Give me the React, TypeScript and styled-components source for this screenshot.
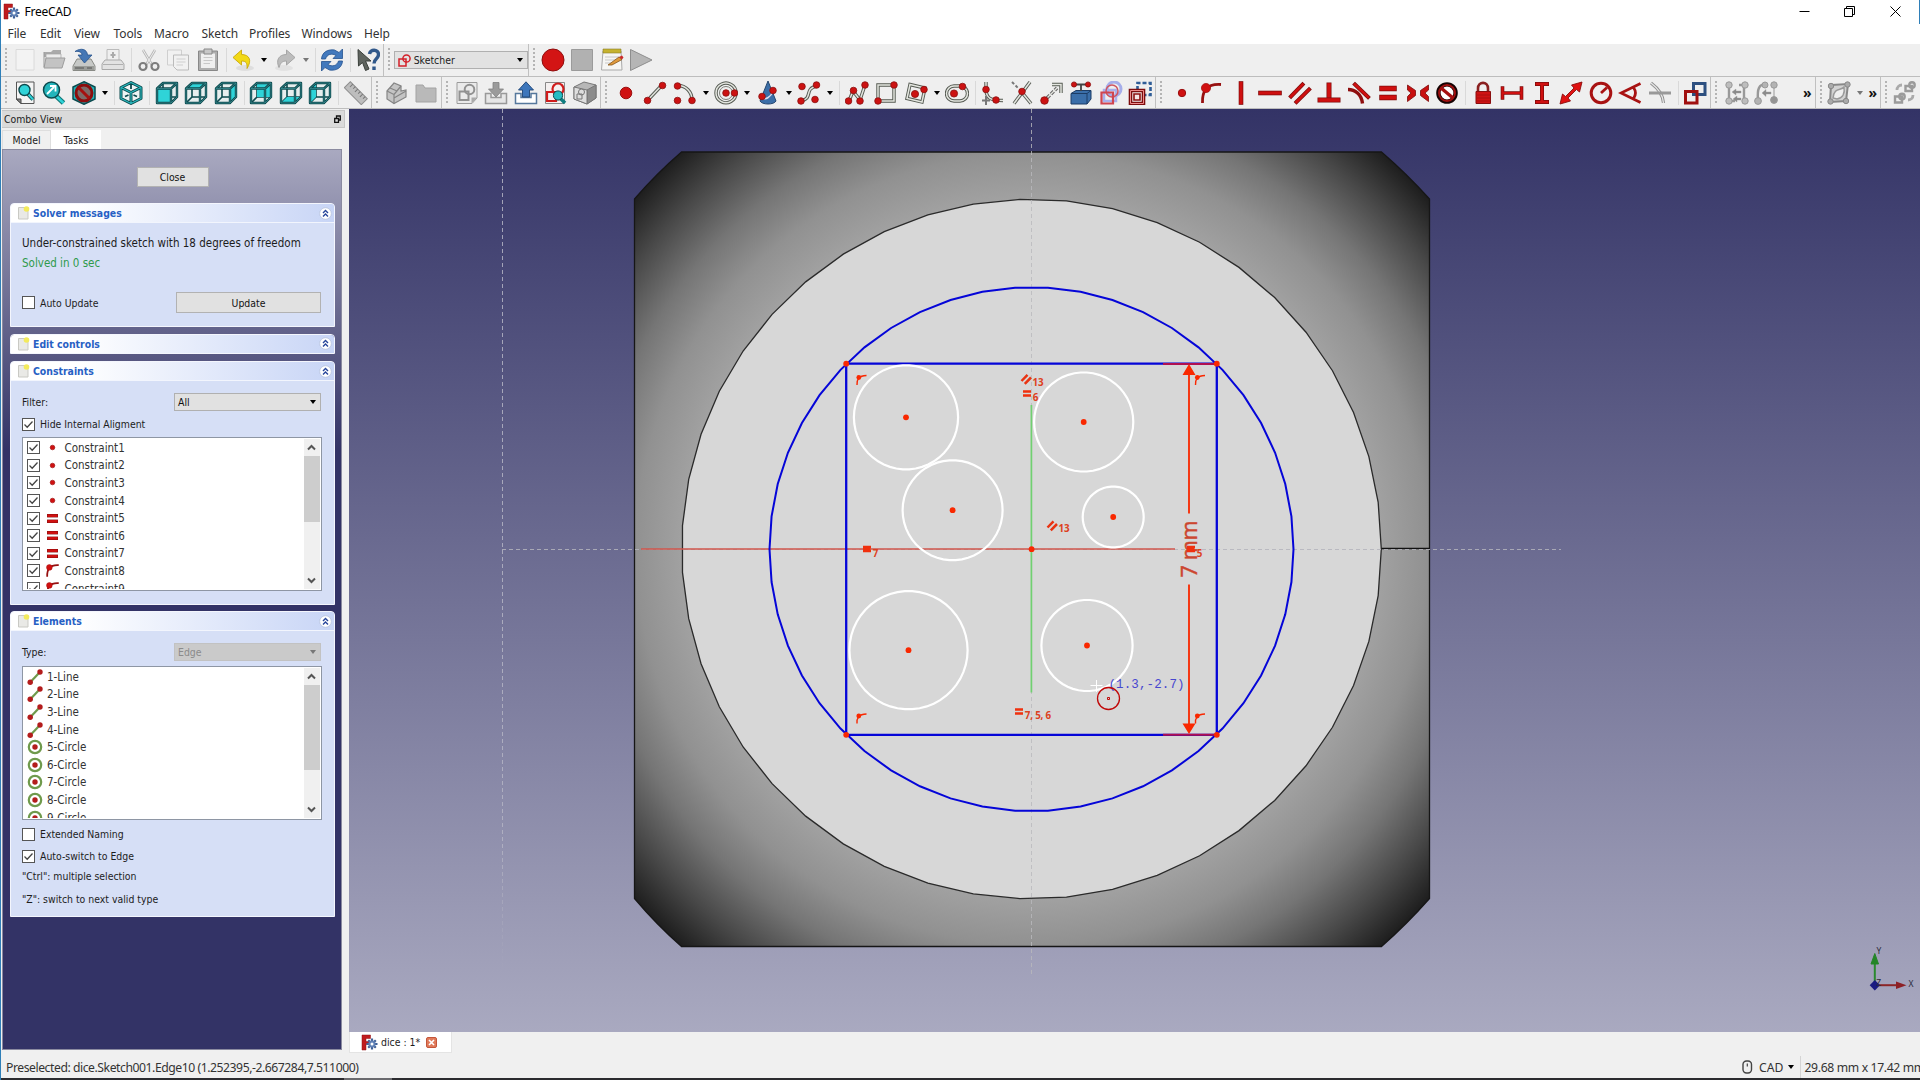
import React from "react";
import styled, { createGlobalStyle, css } from "styled-components";

const GlobalStyle = createGlobalStyle`
  *, *::before, *::after { box-sizing: border-box; }
  body { margin: 0; background: #f0f0f0; overflow: hidden; }
`;

const ui = `"Noto Sans", "Open Sans", sans-serif`;
const narrow = `"DejaVu Sans Condensed", "DejaVu Sans", "Noto Sans", sans-serif`;

/* ---------- window frame ---------- */
const Window = styled.div`
  width: 1920px;
  height: 1080px;
  display: flex;
  flex-direction: column;
  background: #f0f0f0;
  font-family: ${ui};
  font-size: 12px;
  color: #1c1c1c;
  border-left: 1px solid #2f7fb8;
  overflow: hidden;
  white-space: nowrap;
`;
const TitleBar = styled.header`
  height: 24px;
  display: flex;
  align-items: center;
  background: #fff;
  padding: 0 1px 1.5px 2px;
  border-right: 1px solid #2f7fb8;
`;
const TitleText = styled.span`
  flex: 1;
  margin-left: 4.5px;
  font-size: 12px;
  letter-spacing: -0.25px;
  color: #000;
`;
const WindowButton = styled.span`
  width: 45.5px;
  display: flex;
  justify-content: center;
`;
const MenuBar = styled.nav`
  height: 20px;
  display: flex;
  align-items: center;
  background: #fff;
  padding: 0 0 1px 6.5px;
`;
const MenuItem = styled.span<{ $w: number }>`
  width: ${(p) => p.$w}px;
  font-size: 12px;
  letter-spacing: -0.1px;
  color: #333;
`;

/* ---------- toolbars ---------- */
const ToolRow = styled.div<{ $h: number }>`
  height: ${(p) => p.$h}px;
  flex: none;
  display: flex;
  align-items: center;
  border-bottom: 1px solid #bdbdbd;
  background: #efefef;
  overflow: hidden;
`;
const Cell = styled.span`
  width: 29.5px;
  flex: none;
  display: flex;
  justify-content: center;
`;
const Drop = styled.span<{ $dim?: boolean }>`
  width: 12px;
  flex: none;
  display: flex;
  justify-content: center;
  &::after {
    content: "";
    border: 3.5px solid transparent;
    border-top: 4.5px solid ${(p) => (p.$dim ? "#777" : "#000")};
    border-bottom: 0;
  }
`;
const Separator = styled.span`
  width: 6px;
  height: 24px;
  flex: none;
  display: flex;
  &::after {
    content: "";
    width: 1px;
    margin-left: 3px;
    background: #d9d9d9;
  }
`;
const Grip = styled.span<{ $w: number; $first?: boolean }>`
  width: ${(p) => p.$w}px;
  align-self: stretch;
  flex: none;
  padding: 4px 0 4px 4px;
  border-left: ${(p) => (p.$first ? "0" : "1px solid #c0c0c0")};
  &::after {
    content: "";
    display: block;
    width: 2px;
    height: 100%;
    background: repeating-linear-gradient(#b4b4b4 0 2px, transparent 2px 4px);
  }
`;
const More = styled.span<{ $w: number }>`
  width: ${(p) => p.$w}px;
  flex: none;
  text-align: right;
  font-size: 14px;
  font-weight: 700;
  line-height: 14px;
  color: #111;
  padding-right: 3px;
`;
const WorkbenchSelect = styled.span`
  width: 134px;
  height: 18px;
  flex: none;
  display: flex;
  align-items: center;
  gap: 3px;
  padding: 0 1px 0 3px;
  background: #e2e2e2;
  border: 1px solid #b0b0b0;
  font: 10.4px ${narrow};
  & > b { flex: 1; font-weight: 400; }
`;
const Gap = styled.span<{ $w: number }>`
  width: ${(p) => p.$w}px;
  flex: none;
`;

/* ---------- main area ---------- */
const Main = styled.div`
  flex: 1;
  min-height: 0;
  display: flex;
`;
const Side = styled.aside`
  width: 348px;
  display: flex;
  flex-direction: column;
  padding: 1px 4px 0 1px;
  font-family: ${narrow};
`;
const DockTitle = styled.div`
  width: 343px;
  height: 18px;
  display: flex;
  align-items: center;
  justify-content: space-between;
  padding: 0 3px 1px 2px;
  background: #dadada;
  border: 1px solid #c6c6c6;
  border-left: 0;
  font-size: 10.4px;
`;
const TabRow = styled.div`
  height: 21px;
  padding-top: 2px;
  display: flex;
`;
const Tab = styled.span<{ $on?: boolean }>`
  width: ${(p) => (p.$on ? 50 : 49)}px;
  display: flex;
  align-items: center;
  justify-content: center;
  padding-bottom: 1px;
  font-size: 10.4px;
  background: ${(p) => (p.$on ? "#fff" : "#f0f0f0")};
  border: 1px solid ${(p) => (p.$on ? "#fff" : "#dedede")};
  border-bottom: 0;
`;
const TaskArea = styled.div`
  width: 340px;
  flex: 1;
  margin-bottom: 3px;
  display: flex;
  flex-direction: column;
  padding: 16.5px 6px 0 7px;
  border: 1px solid #8b8ba0;
  background: linear-gradient(#a9a9c0 0, #333366 300px);
`;
const Btn = styled.button<{ $w: number; $h: number }>`
  width: ${(p) => p.$w}px;
  height: ${(p) => p.$h}px;
  padding: 0;
  border: 1px solid #b2b2b2;
  background: #e1e1e1;
  font: 10.4px ${narrow};
  color: #111;
`;
const CloseRow = styled.div`
  display: flex;
  justify-content: center;
  height: 36.500px;
`;
const Group = styled.section<{ $h: number; $mb: number }>`
  height: ${(p) => p.$h}px;
  margin-bottom: ${(p) => p.$mb}px;
  flex: none;
  display: flex;
  flex-direction: column;
  background: #d6dff6;
  border: 1px solid #f4f6fd;
  border-radius: 4px 4px 0 0;
  overflow: hidden;
`;
const GroupHead = styled.h3`
  margin: 0;
  height: 19px;
  flex: none;
  display: flex;
  align-items: center;
  padding: 0 2px 0 6px;
  gap: 3px;
  background: linear-gradient(90deg, #fff 20%, #c8d5f6);
  border-bottom: 1px solid #f2f5fd;
  font-size: 10.400px;
  font-weight: 700;
  color: #2760c4;
  & > span { flex: 1; }
`;
const Body = styled.div<{ $pt: number }>`
  flex: 1;
  display: flex;
  flex-direction: column;
  padding: ${(p) => p.$pt}px 13px 0 11px;
`;
const Line = styled.div<{ $h: number; $mt?: number; $green?: boolean; $big?: boolean }>`
  height: ${(p) => p.$h}px;
  margin-top: ${(p) => p.$mt ?? 0}px;
  flex: none;
  display: flex;
  align-items: center;
  justify-content: space-between;
  font-size: ${(p) => (p.$big ? 11.5 : 10.4)}px;
  ${(p) => p.$green && css`color: #2f9a4b;`}
`;
const CheckLabel = styled.label`
  display: flex;
  align-items: center;
  gap: 5px;
`;
const Box = styled.span`
  width: 13px;
  height: 13px;
  display: flex;
  background: #fff;
  border: 1px solid #555;
`;
const Select = styled.span<{ $dim?: boolean }>`
  width: 147px;
  height: 18px;
  display: flex;
  align-items: center;
  justify-content: space-between;
  padding: 0 1px 0 3px;
  border: 1px solid ${(p) => (p.$dim ? "#c2c2c2" : "#b0b0b0")};
  background: ${(p) => (p.$dim ? "#cacaca" : "#e1e1e1")};
  color: ${(p) => (p.$dim ? "#8b8b8b" : "#111")};
`;
const ListBox = styled.div<{ $mt: number }>`
  height: 154px;
  width: 300px;
  flex: none;
  margin-top: ${(p) => p.$mt}px;
  display: flex;
  border: 1px solid #8e96a4;
  background: #fff;
  padding: 1px 1.5px 1px 3px;
`;
const Rows = styled.div`
  flex: 1;
  overflow: hidden;
`;
const Row = styled.div`
  height: 17.6px;
  display: flex;
  align-items: center;
  font-size: 11.5px;
  color: #333;
`;
const RowIcon = styled.span<{ $w: number }>`
  width: ${(p) => p.$w}px;
  display: flex;
  justify-content: center;
`;
const ScrollBar = styled.div`
  width: 15.5px;
  display: flex;
  flex-direction: column;
  align-items: center;
  justify-content: space-between;
  background: #f0f0f0;
`;
const Thumb = styled.div<{ $h: number }>`
  width: 100%;
  height: ${(p) => p.$h}px;
  background: #cdcdcd;
`;
const Track = styled.div`
  flex: 1;
  width: 100%;
`;

const Mdi = styled.main`
  flex: 1;
  display: flex;
  flex-direction: column;
`;
const Viewport = styled.div`
  height: 923px;
  flex: none;
  background: linear-gradient(#333366, #a9a9c0);
  & > svg { display: block; }
`;
const DocTabs = styled.div`
  height: 21px;
  display: flex;
`;
const DocTab = styled.span`
  width: 103px;
  display: flex;
  align-items: center;
  padding-left: 11px;
  background: #fff;
  border: 1px solid #e4e4e4;
  border-top: 0;
  font: 10.4px ${narrow};
  & > span { width: 47.5px; padding-left: 3px; }
`;
const CloseBadge = styled.i`
  width: 11px;
  height: 11px;
  display: flex;
  background: #e07a5a;
  border: 1px solid #c4563a;
  border-radius: 2px;
`;
const StatusBar = styled.footer`
  height: 25px;
  flex: none;
  display: flex;
  align-items: center;
  padding: 3px 0 0 5px;
  font-size: 12.2px;
  letter-spacing: -0.45px;
  color: #333;
`;
const StatusMsg = styled.span`
  flex: 1;
`;
const NavStyle = styled.span`
  width: 59px;
  height: 22px;
  display: flex;
  align-items: center;
  gap: 6px;
  letter-spacing: 0;
  border-right: 1px solid #d4d4d4;
`;
const Size = styled.span`
  width: 119px;
  padding-left: 3.500px;
  letter-spacing: -0.35px;
`;
const TaskStrip = styled.div`
  height: 2px;
  flex: none;
  background: linear-gradient(90deg, #2b2b2f 343px, #6a6a6e 343px 391px, #2b2b2f 391px);
`;

/* ---------- icon building blocks ---------- */
const Dot = ({ x, y, r = 3.3 }: { x: number; y: number; r?: number }) => (
  <circle cx={x} cy={y} r={r} fill="#cc1212" stroke="#8a1010" strokeWidth="0.8" />
);
const Rail = ({ d }: { d: string }) => (
  <g fill="none">
    <path d={d} stroke="#555a52" strokeWidth="3.4" />
    <path d={d} stroke="#e4e6e0" strokeWidth="1.5" />
  </g>
);
const Bar = ({ d, w = 4 }: { d: string; w?: number }) => (
  <g fill="none">
    <path d={d} stroke="#7d0b0b" strokeWidth={w} strokeLinecap="square" />
    <path d={d} stroke="#cf1010" strokeWidth={w - 1.4} strokeLinecap="square" />
  </g>
);
const teal = "#2fd3d8";
const edge = "#0c4a4e";

const Cube = ({ face }: { face: string }) => (
  <g>
    <path d="M1.5 7.5 8 1.5H22.500V16L16 22.500H1.500Z" fill="#e6eeee" stroke="none" />
    <g fill="none" stroke={edge} strokeWidth="1.6">
      <path d="M8 2V16M8 16H22M8 16 2 22" />
    </g>
    <path d={face} fill={teal} />
    <g fill="none" stroke={edge} strokeWidth="2.4" strokeLinejoin="round">
      <path d="M2 7.500H16V22H2ZM2 7.500 8 2H22L16 7.500M22 2V16L16 22" />
    </g>
    <g fill="none" stroke="#3a8c90" strokeWidth="0.8">
      <path d="M2 7.500H16V22H2ZM2 7.500 8 2H22L16 7.500M22 2V16L16 22" />
    </g>
  </g>
);
const front = "M2 7.500H16V22H2Z";
const top = "M2 7.500 8 2H22L16 7.500Z";
const right = "M16 7.500 22 2V16L16 22Z";
const rear = "M8 3H21V16H8Z";
const bottom = "M8 16H22L16 22H2Z";
const left = "M2 7.500 8 2V16L2 22Z";

const icons: Record<string, React.ReactNode> = {
  new: <path d="M3 1.500H21V22H3Z" fill="#f3f3f3" stroke="#dadada" />,
  open: <><path d="M2 4H9L11 2H19V9H2Z" fill="#aaa" /><path d="M4 6H19V12H4Z" fill="#ececec" stroke="#a5a5a5" strokeWidth=".7" /><path d="M4 10H23L20 20H2Z" fill="#c3c3c3" stroke="#9d9d9d" /><path d="M2 4V19" stroke="#999" /></>,
  save: <><path d="M5 11H19L23 18V22.500H1V18Z" fill="#c7c9c7" stroke="#888a85" /><path d="M2 18H22V22H2Z" fill="#9b9d99" /><path d="M3 20H12M15 20H20" stroke="#555" /><path d="M3 3.500C9-.5 15 1 15.500 7H20L12.500 15 6 7H10C10 4 7 3 3 3.500Z" fill="#4577b5" stroke="#28538c" strokeWidth=".8" /></>,
  print: <><path d="M6 1.500H18V13H6Z" fill="#efefef" stroke="#bbb" /><path d="M12 4V10M9.500 7H14.500" stroke="#aaa" strokeWidth="2" /><path d="M4 12H20L23 16V21.500H1V16Z" fill="#e2e2e2" stroke="#a9a9a9" /><path d="M2 16.500H22" stroke="#b0b0b0" /></>,
  cut: <g fill="none"><path d="M6 2 15 17M18 2 9 17" stroke="#b9b9b9" strokeWidth="2.600" /><path d="M6 2 15 17M18 2 9 17" stroke="#ededed" strokeWidth="1" /><circle cx="6" cy="18.500" r="3.500" stroke="#7d7d7d" strokeWidth="2.200" /><circle cx="18" cy="18.500" r="3.500" stroke="#7d7d7d" strokeWidth="2.200" /></g>,
  copy: <g fill="#f1f1f1" stroke="#cfcfcf"><path d="M1.500 2H15.500V17H1.500Z" /><path d="M7.500 7H22.500V22H11L7.500 18.500Z" stroke="#bbb" /><path d="M10.500 11H19.500M10.500 14H19.500M10.500 17H17" /></g>,
  paste: <><path d="M2.500 3H21.500V22.500H2.500Z" fill="#aeaeae" stroke="#888" /><path d="M5 5.500H19V20H5Z" fill="#efefef" /><path d="M8 1H16V6H8Z" fill="#c7c7c7" stroke="#888" /><path d="M7.500 9.500H16.500M7.500 12.500H16.500M7.500 15.500H14" stroke="#c8c8c8" /></>,
  undo: <><ellipse cx="14" cy="20" rx="9" ry="3" fill="#dedede" /><path d="M2 9.500 10.500 2V6.500C18 6.500 21.500 12 16 20.500C16.500 15 15 13 10.500 13V17Z" fill="#f2d916" stroke="#c9a80c" strokeWidth=".9" /></>,
  redo: <><ellipse cx="11" cy="20" rx="9" ry="3" fill="#e2e2e2" /><path d="M22 9.500 13.500 2V6.500C6 6.500 2.500 12 6 19.500C7.500 15 9 13 13.500 13V17Z" fill="#bcbcbc" stroke="#a0a0a0" strokeWidth=".9" /></>,
  refresh: <g fill="#4279bd" stroke="#23528f" strokeWidth=".8"><path d="M1.500 11C2 4 8 1 14.500 2L19 4.500 22.500 1V10.500H13L16 7.500C12 5 7 6 5.500 11Z" /><path d="M22.500 13C22 20 16 23 9.500 22L5 19.500 1.500 23V13.500H11L8 16.500C12 19 17 18 18.500 13Z" /></g>,
  whats: <><path d="M2 1.500 15 13H9.500L13 21 9.500 22.500 6.500 14.500 2.500 18Z" fill="#5f645f" stroke="#3a3f3a" /><path d="M13.500 6C14 1 22.500 1 22.500 6.500C22.500 11 18 10.500 18 15.500M18 18.500V22" fill="none" stroke="#31588a" strokeWidth="3.400" /></>,
  record: <circle cx="12" cy="12" r="11" fill="#d31414" stroke="#8f0d0d" />,
  stop: <path d="M1.500 1.500H22.500V22.500H1.500Z" fill="#b1b1b1" stroke="#9b9b9b" />,
  edit: <><path d="M3 3H21L22 22H1.500Z" fill="#f6f6f4" stroke="#aaa" /><path d="M3 1H21V5H3Z" fill="#c5b22f" stroke="#8c7e2a" strokeWidth=".6" /><path d="M5 9H19M5 12H16M5 15H12" stroke="#c8c8c8" /><path d="M8 17 19 9 22 11.500 12 17Z" fill="#e09a3c" stroke="#86551b" strokeWidth=".8" /><path d="M19 9 22 7.500 23.500 9.500 22 11.500Z" fill="#cc2b2b" /></>,
  play: <path d="M1.500 1.500 23 12 1.500 22.500Z" fill="#b5b5b5" stroke="#8e8e8e" />,

  fit: <><path d="M3.500 1H21V22.500H8L3.500 18.500Z" fill="#f4f4f4" stroke="#555" /><path d="M3.500 18H8V22.500Z" fill="#888" stroke="#444" /><path d="M15 13 20 18.500" stroke={edge} strokeWidth="4" /><path d="M15 13 20 18.500" stroke={teal} strokeWidth="2" /><circle cx="11.500" cy="9" r="5.500" fill={teal} stroke={edge} strokeWidth="1.400" /></>,
  zoomsel: <><path d="M13 14 21.500 22" stroke="#177" strokeWidth="5" /><path d="M13 14 21.500 22" stroke={teal} strokeWidth="2.600" /><circle cx="9.500" cy="9" r="8" fill="#23b5bb" stroke={edge} strokeWidth="1.500" /><path d="M5 13 12 6M8 5H13.500V10.500" fill="none" stroke="#fff" strokeWidth="1.800" /></>,
  nodraw: <><path d="M12 .8 23 6V18L12 23.300 1 18V6Z" fill="#20b5ba" stroke={edge} strokeWidth="1.500" /><circle cx="12" cy="12" r="8" fill="#7d6a68" stroke="#8c0d0d" strokeWidth="3" /><path d="M6.500 6.500 17.500 17.500" stroke="#a51010" strokeWidth="3" /></>,
  iso: <g fill="none" strokeLinejoin="round"><path d="M12 1.500 22 6.500V17.500L12 22.500 2 17.500V6.500Z" fill="#eef5f5" /><path d="M12 1.500 22 6.500V17.500L12 22.500 2 17.500V6.500ZM2 6.500 12 11.500 22 6.500M12 11.500V22.500" stroke={edge} strokeWidth="3" /><path d="M12 1.500 22 6.500V17.500L12 22.500 2 17.500V6.500ZM2 6.500 12 11.500 22 6.500M12 11.500V22.500" stroke="#2bbcc0" strokeWidth="1.100" /><path d="M6 15.500 9.500 14M14.500 14 18 15.500M12 4V8" stroke={edge} strokeWidth="1.800" /></g>,
  front: <Cube face={front} />, top: <Cube face={top} />, right: <Cube face={right} />,
  rear: <Cube face={rear} />, bottom: <Cube face={bottom} />, left: <Cube face={left} />,
  ruler: <g transform="rotate(45 12 12)"><path d="M0 8H24V16.500H0Z" fill="#bdbdbd" stroke="#8e8e8e" /><path d="M3.500 8V12M7 8V11M10.500 8V12M14 8V11M17.500 8V12M21 8V11" stroke="#777" /></g>,
  part: <g fill="#c4c4c4" stroke="#858585" strokeWidth="1.200"><path d="M3 10 10 2 17 5V10L22 9V16L10 22.500 3 18Z" /><path d="M3 10 10 13.500V22.500M10 13.500 17 5M10 17 22 10M6 7 13 10" fill="none" /></g>,
  folder: <path d="M2 4H9L11 7H22V21H2Z" fill="#b9b9b9" stroke="#a3a3a3" />,
  newsketch: <><path d="M2 1.500H22V17L17 22.500H2Z" fill="#eaeaea" stroke="#9b9b9b" /><path d="M22 16.500H16.500V22.500Z" fill="#aaa" /><g fill="none" stroke="#919191" strokeWidth="2"><path d="M4.500 10.500H13.500V19H4.500Z" /><circle cx="14.500" cy="8.500" r="4.800" /></g></>,
  leave: <><path d="M1.500 12.500H7V16.500H17V12.500H22.500V22.500H1.500Z" fill="#e6e6e6" stroke="#999" strokeWidth="1.500" /><path d="M9 1.500H15V8H19.500L12 16 4.500 8H9Z" fill="#9b9b9b" stroke="#808080" strokeWidth=".8" /></>,
  exportup: <><path d="M1.500 12.500H7V16.500H17V12.500H22.500V22.500H1.500Z" fill="#fff" stroke="#56789c" strokeWidth="1.500" /><path d="M12 .8 19.500 9H15.500V16H8.500V9H4.500Z" fill="#3d76bb" stroke="#1d4475" strokeWidth=".9" /></>,
  mapsketch: <><path d="M2.500 1.500H21.500V22.500H2.500Z" fill="#f4f0f0" stroke="#888" /><g fill="none" stroke="#d01c1c" strokeWidth="2.200"><path d="M4 11H13V20H4Z" /><circle cx="15" cy="8" r="5.500" /></g><path d="M17 17 22 22" stroke="#0f7d80" strokeWidth="3.500" /><circle cx="15" cy="14.500" r="4.600" fill="#25bcc2" stroke={edge} /></>,
  sketchcube: <g stroke="#777" strokeWidth="1"><path d="M1 6 11 1 23 4V17L14 23 1 18Z" fill="#b7b7b7" /><path d="M14 9 23 4V17L14 23Z" fill="#8c8c8c" /><path d="M1 6 14 9V23L1 18Z" fill="#dedede" /><circle cx="8.500" cy="11" r="3" fill="none" /><path d="M4 13H9V18H4Z" fill="none" /></g>,

  point: <circle cx="12" cy="12" r="5.800" fill="#cf1111" stroke="#9a0f0f" />,
  line: <><Rail d="M4 20 19 4" /><Dot x={4.500} y={19.500} /><Dot x={19.500} y={4.500} /></>,
  arc: <><Rail d="M5 4.500C13 4.500 19 11 19 19" /><Dot x={4.500} y={5} /><Dot x={4.500} y={19.500} /><Dot x={19} y={19.500} /></>,
  circle: <><Rail d="M22 12A10 9.800 0 1 1 22 11.900" /><circle cx="12" cy="12" r="6.500" fill="none" stroke="#7c8078" strokeWidth="1" /><Dot x={12} y={12} /><Dot x={20.500} y={12} /></>,
  cone: <><path d="M12 0 20 20C18 24 6 24 4 20Z" fill="#3c6fa8" stroke="#25466f" /><path d="M6 16C9 20 15 16 17 10" fill="none" stroke="#dde" strokeWidth="1.500" /><Dot x={6} y={15.500} /><Dot x={17} y={9.500} /></>,
  bspline: <><Rail d="M4 20C17 17 6 8 20 5" /><Dot x={5} y={5.500} /><Dot x={19.500} y={4} /><Dot x={4} y={20} /><Dot x={18} y={18.500} /></>,
  polyline: <><Rail d="M4 20 8 10 15 19 20 4" /><Dot x={3.500} y={20} /><Dot x={8.500} y={9.500} /><Dot x={15} y={20} /><Dot x={20} y={4} /></>,
  rect: <><Rail d="M4 4H20V20H4Z" /><Dot x={20} y={4} /><Dot x={4} y={20} /></>,
  polygon: <><Rail d="M6 3.500 21 7 18 21 3 17.500Z" /><Dot x={11} y={13} r={3.600} /><Dot x={20} y={8.500} /></>,
  slot: <><Rail d="M9 5H15A7.500 7.500 0 0 1 15 20H9A7.500 7.500 0 0 1 9 5Z" /><Dot x={9} y={12.500} r={3.600} /><Dot x={17.500} y={5.500} /></>,
  fillet: <><Rail d="M5 1V10C6 17 9 19.500 22 19.500" /><path d="M1 19.500H9M5 15V24" stroke="#777" strokeWidth="2" /><Dot x={5} y={8.500} /><Dot x={15} y={19} /></>,
  trim: <><Rail d="M20 1 4 22.500" /><Rail d="M10 9 21 22.500" /><path d="M2 1 9 8" stroke="#777" strokeWidth="2" strokeDasharray="3 2" /><Dot x={12} y={10.500} /></>,
  extend: <><path d="M7 17 17 7" stroke="#666" strokeWidth="3.400" strokeDasharray="4 1.500" /><path d="M7 17 17 7" stroke="#e4e6e0" strokeWidth="1.300" /><Rail d="M12 3.500H21V12" /><Dot x={4.500} y={19.500} r={3.800} /></>,
  external: <><path d="M2 12.500 7 9.500H22V18L18 23H2Z" fill="#3a6ea9" stroke="#1d3d66" /><path d="M2 12.500H18V23M18 12.500 22 9.500" fill="none" stroke="#1d3d66" /><path d="M5 3.500H19M12 3.500V10" stroke="#444" strokeWidth="1.800" /><Dot x={5} y={3.500} r={2.600} /><Dot x={19} y={3.500} r={2.600} /></>,
  carbon: <g fill="none"><circle cx="15" cy="8" r="7" stroke="#a6aeea" strokeWidth="3" /><path d="M5 9H17V20H5Z" stroke="#a9b0ec" strokeWidth="2.500" /><circle cx="13" cy="10" r="6" stroke="#cf5560" strokeWidth="1.500" /><path d="M2.500 11.500H14V22.500H2.500Z" stroke="#cf4550" strokeWidth="2.200" /></g>,
  construct: <g fill="none"><path d="M9.500 9V2H22.500V14H16" stroke="#2f5d97" strokeWidth="2.600" strokeDasharray="4 2" /><path d="M2.500 9.500H15.500V22.500H2.500Z" stroke="#7c0c0c" strokeWidth="3.600" /><path d="M2.500 9.500H15.500V22.500H2.500Z" stroke="#ee8a8a" strokeWidth="1" /><path d="M6 13H12V19H6Z" fill="#f5e4e4" stroke="#8e1010" strokeWidth="1.600" /></g>,

  cpoint: <circle cx="12" cy="12" r="3.700" fill="#cf1111" stroke="#9a0f0f" />,
  ponobj: <><path d="M3.500 22C3 11 7 2.500 22 3.500" fill="none" stroke="#971010" strokeWidth="2.800" /><circle cx="7" cy="7" r="4.600" fill="#d01010" stroke="#a00d0d" strokeWidth=".7" /></>,
  vert: <Bar d="M12 2.500V21.500" w={4.600} />,
  horiz: <Bar d="M2.500 12H21.500" w={4.600} />,
  parallel: <><Bar d="M3 15.500 14.500 3.500" /><Bar d="M8.500 21 21 8.500" /></>,
  perp: <><Bar d="M12 4V17" w={5} /><Bar d="M3 19H21" w={5} /></>,
  tangent: <><path d="M1 8.500C8 8.500 14.500 13 15.500 22.500" fill="none" stroke="#8f0f0f" strokeWidth="3.400" /><Bar d="M8 3.500 21 16" /></>,
  equal: <><Bar d="M6 7.500H18" w={5.500} /><Bar d="M6 16.500H18" w={5.500} /></>,
  symm: <g fill="#c81010" stroke="#7d0b0b" strokeWidth=".8"><path d="M1.500 4 9.500 9.500V14.500L1.500 20.500V15.500L5 12 1.500 9Z" /><path d="M22.500 4 14.500 9.500V14.500L22.500 20.500V15.500L19 12 22.500 9Z" /></g>,
  block: <g fill="none"><circle cx="12" cy="12" r="8.600" fill="#fff" stroke="#160303" strokeWidth="4.400" /><circle cx="12" cy="12" r="8" stroke="#a01010" strokeWidth="2" /><path d="M6 7 18 17" stroke="#a51010" strokeWidth="3.400" /></g>,
  lock: <><path d="M7 11V7.500C7 0 17 0 17 7.500V11" fill="none" stroke="#8a2020" strokeWidth="2.600" /><path d="M5 10.500H19.500V22.500H5Z" fill="#cf1313" stroke="#8a0f0f" /><path d="M6 14H19M6 17H19M6 20H19" stroke="#a30f0f" strokeWidth=".8" /></>,
  hdist: <Bar d="M2.500 7V17M21.500 7V17M3 12H21" w={3.600} />,
  vdist: <Bar d="M7 3H17M7 21H17M12 3V21" w={4} />,
  dist: <path d="M23 1 20.500 11 17.500 8.500 9 17 11.500 20 1 23 3.500 13 6.500 15.500 15 7 12.500 4Z" fill="#e01212" stroke="#8a0c0c" strokeWidth=".9" />,
  radius: <g fill="none" stroke="#a81212"><circle cx="12" cy="12" r="9.800" strokeWidth="3" /><path d="M12 12 18 6.500" strokeWidth="2.800" /></g>,
  angle: <g fill="none" stroke="#a81212" strokeWidth="2.800"><path d="M22.500 2.500 3 12 22.500 21.500M15.500 6.500C18 10 18 14 15.500 17.500" /></g>,
  snell: <g fill="none"><path d="M3 2C11 8 15 14 15.500 22" stroke="#8e8e8e" strokeWidth="3.200" /><path d="M3 2C11 8 15 14 15.500 22" stroke="#e6e6e6" strokeWidth="1.400" /><path d="M1 12H23" stroke="#999" strokeWidth="3" /></g>,
  toggle: <g fill="none"><path d="M10.500 2.500H22V13.500H10.500Z" stroke="#2d5080" strokeWidth="3" /><path d="M2.500 10.500H14V22H2.500Z" stroke="#a01010" strokeWidth="3" /></g>,
  sel1: <g fill="#bdbdbd" stroke="#999"><path d="M4 5V19M19 5V19M19 4H14M4 20H10" fill="none" strokeWidth="2.400" /><path d="M16 10H11V8L7 11 11 14V12H16ZM16 17H12V15L8 18 12 21V19H16Z" fill="#8a8a8a" strokeWidth=".4" /><circle cx="4" cy="4" r="3.200" /><circle cx="20" cy="4" r="3.200" /><circle cx="4" cy="20" r="3.200" /><circle cx="20" cy="20" r="3.200" /></g>,
  sel2: <g fill="#b3b3b3" stroke="#999"><path d="M12 3C5 3 3 8 4 19" fill="none" strokeWidth="2.400" /><path d="M17 11H12V8.500L8 12 12 15.500V13H17Z" fill="#8a8a8a" strokeWidth=".4" /><path d="M20 5V19" /><circle cx="11" cy="4" r="3" /><circle cx="20" cy="4" r="3.200" /><circle cx="4" cy="20" r="3.400" /><circle cx="20" cy="19" r="3.400" fill="#949494" /></g>,
  bs1: <g fill="#aaa" stroke="#888"><path d="M4 4 21 3 19 20 3 21Z" fill="#d2d2d2" strokeWidth="2" /><path d="M6 17C7 6 14 10 17 6 18 12 16 17 10 18Z" fill="#efefef" stroke="#999" strokeWidth="1.500" /><circle cx="4" cy="5" r="2.700" /><circle cx="20.500" cy="3.500" r="2.700" /><circle cx="19" cy="20" r="2.700" /><circle cx="3.500" cy="20.500" r="2.700" /></g>,
  virt: <g fill="none" stroke="#9b9b9b" strokeWidth="2.400"><path d="M12.500 5H19V10H12.500Z" /><circle cx="19" cy="4" r="2.700" /><path d="M2 15.500H9V21.500H2Z" /><circle cx="9" cy="15.500" r="2.700" /><path d="M4 9C4 6 6 4 9 4M20 14C20 17 18 19 15 19" strokeWidth="2.800" stroke="#aaa" /></g>,
};

const Icon = ({ n, s = 24 }: { n: string; s?: number }) => (
  <svg width={s} height={s} viewBox="0 0 24 24">{icons[n]}</svg>
);

const Logo = () => (
  <svg width="17" height="17" viewBox="0 0 17 17">
    <path d="M1 1H9.500V4.500H5V7.500H8V10.500H5V16H1Z" fill="#c01b1e" stroke="#8d1114" strokeWidth=".5" />
    <g stroke="#3e5f96" strokeWidth="2.200"><path d="M11 4.500V15.500M5.500 10H16.500M7.200 6.200 14.800 13.800M14.800 6.200 7.200 13.800" /></g>
    <circle cx="11" cy="10" r="3.600" fill="#5f80b5" />
    <circle cx="11" cy="10" r="1.500" fill="#fff" />
  </svg>
);

/* "|" separator, "v"/"V" drop-down arrow, anything else an icon name */
const Tools = ({ items }: { items: string }) => (
  <>
    {items.split(" ").map((n, i) =>
      n === "|" ? <Separator key={i} /> : n === "v" ? <Drop key={i} /> : n === "V" ? <Drop key={i} $dim /> : <Cell key={i}><Icon n={n} /></Cell>
    )}
  </>
);

const Check = ({ on }: { on?: boolean }) => (
  <Box>{on && <svg width="11" height="11" viewBox="0 0 11 11"><path d="M1.500 5.500 4.200 8.200 9.500 2.500" fill="none" stroke="#444" strokeWidth="1.300" /></svg>}</Box>
);
const Chevron = ({ up }: { up?: boolean }) => (
  <svg width="15" height="17" viewBox="0 0 15 17"><path d={up ? "M4 10.500 7.500 7 11 10.500" : "M4 6.500 7.500 10 11 6.500"} fill="none" stroke="#555" strokeWidth="2" /></svg>
);
const Head = ({ title }: { title: string }) => (
  <GroupHead>
    <svg width="13" height="14" viewBox="0 0 13 14"><path d="M1.500 1.500H11V13H1.500Z" fill="#e9e9e6" stroke="#c9c9c4" /><circle cx="9.500" cy="3" r="2.800" fill="#f3ea5c" /></svg>
    <span>{title}</span>
    <svg width="13" height="13" viewBox="0 0 13 13"><circle cx="6.500" cy="6.500" r="5.800" fill="#fff" stroke="#b9c4dd" strokeWidth=".8" /><path d="M4 6 6.500 3.500 9 6M4 9.500 6.500 7 9 9.500" fill="none" stroke="#27459a" strokeWidth="1.400" /></svg>
  </GroupHead>
);
const List = ({ thumb, mt, children }: { thumb: number; mt: number; children: React.ReactNode }) => (
  <ListBox $mt={mt}>
    <Rows>{children}</Rows>
    <ScrollBar><Chevron up /><Track><Thumb $h={thumb} /></Track><Chevron /></ScrollBar>
  </ListBox>
);

const constraintIcons = ["cpoint", "cpoint", "cpoint", "cpoint", "equal", "equal", "equal", "ponobj", "ponobj"];

/* ---------- 3D view ---------- */
const ring = (cx: number, cy: number, r: number, n: number) =>
  Array.from({ length: n }, (_, i) => {
    const a = (i * 2 * Math.PI) / n;
    return `${(cx + r * Math.cos(a)).toFixed(2)},${(cy - r * Math.sin(a)).toFixed(2)}`;
  }).join(" ");

const holes: [number, number, number][] = [
  [906, 417.3, 52.1], [1083.7, 422, 49.6], [952.6, 510.2, 50], [1113.2, 517, 30.5], [908.5, 650.2, 59.1], [1087, 645.5, 45.6],
];

const Tan = ({ x, y }: { x: number; y: number }) => (
  <g transform={`translate(${x} ${y})`} fill="none" stroke="#f92800">
    <path d="M1.500 11C1 6 3 1.500 11 1.500" strokeWidth="1.400" />
    <circle cx="3.300" cy="3.500" r="2.400" fill="#f92800" stroke="none" />
  </g>
);
const Mark = ({ x, y, par, label }: { x: number; y: number; par?: boolean; label: string }) => (
  <g transform={`translate(${x} ${y})`}>
    {par ? (
      <path d="M.5 7 6.500 .8M3.800 9.800 10 3.500" stroke="#e93312" strokeWidth="2.500" />
    ) : (
      <path d="M1 2.500H9M1 6.500H9" stroke="#f0300e" strokeWidth="2.400" />
    )}
    <text x={par ? 11.500 : 10.800} y={par ? 11.500 : 12} fontSize="9.800" fontWeight="700" fill="#dd4020" fontFamily={ui} letterSpacing="-.2">{label}</text>
  </g>
);

const Scene = () => (
  <svg width="1571" height="923" viewBox="349 109 1571 923">
    <defs>
      <radialGradient id="shade" gradientUnits="userSpaceOnUse" cx="1031.500" cy="549" r="535">
        <stop offset=".6" stopColor="#ababab" />
        <stop offset=".74" stopColor="#919191" />
        <stop offset=".82" stopColor="#757575" />
        <stop offset=".91" stopColor="#484848" />
        <stop offset="1" stopColor="#181818" />
      </radialGradient>
      <linearGradient id="fade" gradientUnits="userSpaceOnUse" x1="0" y1="109" x2="0" y2="975">
        <stop offset="0" stopColor="#b4b4c4" />
        <stop offset=".85" stopColor="#b4b4c4" />
        <stop offset="1" stopColor="#b4b4c4" stopOpacity="0" />
      </linearGradient>
    </defs>
    <path d="M681.500 152H1381.500Q1407 174 1429.500 199V898.500Q1407 924 1381.500 946.500H681.500Q656 924 634.500 898.500V199Q656 174 681.500 152Z" fill="url(#shade)" stroke="#161616" strokeWidth="1.300" />
    <polygon points={ring(1031.500, 549, 349.800, 47)} fill="#d7d7d7" stroke="#2a2a2a" strokeWidth="1.300" />
    <path d="M1381.500 548.500H1430" stroke="#111" strokeWidth="1.300" />
    <path d="M502.500 109V975" stroke="url(#fade)" strokeDasharray="4 3" strokeOpacity=".85" />
    <path d="M1031.500 109V975" stroke="#b9b9bd" strokeOpacity=".8" strokeDasharray="4 3" />
    <path d="M502 549.500H1561" stroke="#b4b4bc" strokeOpacity=".85" strokeDasharray="4 3" />
    <path d="M641 549H1175" stroke="#d0564c" strokeWidth="1.400" />
    <path d="M1031.400 405V692.500" stroke="#71d071" strokeWidth="1.700" />
    <g fill="none" stroke="#0505d8" strokeWidth="2">
      <polygon points={ring(1031.500, 549.200, 262, 50)} />
      <path d="M846.200 363.700H1216.800V734.800H846.200Z" strokeWidth="2.300" />
    </g>
    <path d="M1163 364H1217M1163 734.800H1217" stroke="#b01050" strokeWidth="2" />
    <g fill="none" stroke="#fff" strokeWidth="2.200">
      {holes.map(([x, y, r]) => <polygon key={x} points={ring(x, y, r, 50)} />)}
    </g>
    <g fill="#f92800">
      {holes.map(([x, y]) => <circle key={x} cx={x} cy={y} r="2.900" />)}
      {[[846.200, 363.700], [1216.800, 363.700], [846.200, 734.800], [1216.800, 734.800], [1031.600, 549.200]].map(([x, y]) => (
        <circle key={`${x}-${y}`} cx={x} cy={y} r="2.900" />
      ))}
      <path d="M1189 364 1195.500 375H1182.500ZM1189 734 1195.500 723.500H1182.500Z" />
    </g>
    <path d="M1189 374V513.500M1189 584.500V724" stroke="#f92800" strokeWidth="1.800" />
    <text transform="translate(1197 577.500) rotate(-90)" fontSize="21.500" fontFamily={ui} fill="#cc4630" stroke="#cc4630" strokeWidth=".4" textLength="57">7 mm</text>
    <Tan x={855.500} y={374} /><Tan x={1194} y={374} /><Tan x={855.500} y={712.500} /><Tan x={1194} y={712.500} />
    <Mark x={1021} y={374} par label="13" />
    <Mark x={1022} y={389} label="6" />
    <Mark x={1047} y={520.500} par label="13" />
    <Mark x={862} y={544.500} label="7" />
    <Mark x={1186} y={544.500} label="5" />
    <path d="M863 549H870.500M1187 549H1194.500" stroke="#f0300e" strokeWidth="4" />
    <Mark x={1014} y={707} label="7, 5, 6" />
    <path d="M1096.500 680V692M1090.500 685.500H1102.500" stroke="#fff" strokeWidth="1" />
    <text x="1108.500" y="687.500" fontSize="12.500" fontFamily={`"Liberation Mono", monospace`} fill="#4747cf" textLength="76">(1.3,-2.7)</text>
    <circle cx="1108.500" cy="698.500" r="11" fill="none" stroke="#c00808" strokeWidth="1.300" />
    <path d="M1107.500 697.500H1109.500V699.500H1107.500Z" fill="none" stroke="#c00808" />
    <g>
      <path d="M1874.800 984V960" stroke="#2a8a2e" strokeWidth="2" />
      <path d="M1874.800 953.500 1878.500 964H1871Z" fill="#238527" stroke="#238527" />
      <path d="M1876 985.200H1898" stroke="#8d2527" strokeWidth="2" />
      <path d="M1906.500 985.200 1896 981.500V989Z" fill="#8d2025" />
      <path d="M1874.800 980 1880 985.200 1874.800 990.500 1869.700 985.200Z" fill="#1b1b82" />
      <g fontFamily={ui} fontSize="8.500" fill="#2c2c3c"><text x="1876.500" y="954">Y</text><text x="1908.500" y="986.500">X</text><text x="1876.300" y="986">Z</text></g>
    </g>
  </svg>
);

const menus: [string, number][] = [["File", 32.500], ["Edit", 34], ["View", 39.500], ["Tools", 40.500], ["Macro", 47.500], ["Sketch", 47.500], ["Profiles", 52.500], ["Windows", 62.500], ["Help", 40]];

export default function App() {
  return (
    <>
      <GlobalStyle />
      <Window>
        <TitleBar>
          <Logo />
          <TitleText>FreeCAD</TitleText>
          <WindowButton><svg width="11" height="11"><path d="M.5 5.500H10.500" stroke="#000" /></svg></WindowButton>
          <WindowButton><svg width="11" height="11"><path d="M.5 2.500H8.500V10.500H.5ZM2.500 2.500V.5H10.500V8.500H8.500" fill="none" stroke="#000" /></svg></WindowButton>
          <WindowButton><svg width="11" height="11"><path d="M.5 .5 10.500 10.500M10.500 .5 .5 10.500" stroke="#000" /></svg></WindowButton>
        </TitleBar>
        <MenuBar>{menus.map(([m, w]) => <MenuItem key={m} $w={w}>{m}</MenuItem>)}</MenuBar>
        <ToolRow $h={33}>
          <Grip $w={9.200} $first />
          <Tools items="new open save print | cut copy paste | undo v redo V | refresh | whats" />
          <Grip $w={11} />
          <WorkbenchSelect>
            <svg width="13" height="13" viewBox="0 0 13 13"><g fill="none" stroke="#d3202a" strokeWidth="1.500"><path d="M1 5H8V12H1Z" /><circle cx="8.500" cy="4.500" r="3.600" /></g></svg>
            <b>Sketcher</b><Drop />
          </WorkbenchSelect>
          <Gap $w={0.500} />
          <Grip $w={10} />
          <Tools items="record stop edit play" />
        </ToolRow>
        <ToolRow $h={32}>
          <Grip $w={9.200} $first />
          <Tools items="fit zoomsel nodraw v | iso | front top right | rear bottom left | ruler" />
          <Grip $w={11} />
          <Tools items="part folder" />
          <Grip $w={11.500} />
          <Tools items="newsketch leave exportup mapsketch sketchcube" />
          <Grip $w={11.500} />
          <Tools items="point line arc v circle v cone v bspline v | polyline rect polygon v slot | fillet trim extend external carbon construct" />
          <Grip $w={12} />
          <Tools items="cpoint ponobj vert horiz parallel perp tangent equal symm block | lock hdist vdist dist radius angle snell | toggle" />
          <Grip $w={12} />
          <Tools items="sel1 sel2" />
          <More $w={33.500}>»</More>
          <Grip $w={10} />
          <Tools items="bs1 V" />
          <More $w={14}>»</More>
          <Grip $w={10} />
          <Tools items="virt" />
        </ToolRow>
        <Main>
          <Side>
            <DockTitle>
              Combo View
              <svg width="7" height="8" viewBox="0 0 7 8"><path d="M.7 3.500H4.500V7.300H.7ZM2.500 3V1H6.300V5H5" fill="none" stroke="#111" strokeWidth="1.300" /></svg>
            </DockTitle>
            <TabRow><Tab>Model</Tab><Tab $on>Tasks</Tab></TabRow>
            <TaskArea>
              <CloseRow><Btn $w={72} $h={20}>Close</Btn></CloseRow>
              <Group $h={123.500} $mb={7}>
                <Head title="Solver messages" />
                <Body $pt={10}>
                  <Line $h={20} $big>Under-constrained sketch with 18 degrees of freedom</Line>
                  <Line $h={20} $big $green>Solved in 0 sec</Line>
                  <Line $h={26} $mt={16.500}>
                    <CheckLabel><Check />Auto Update</CheckLabel>
                    <Btn $w={145} $h={21}>Update</Btn>
                  </Line>
                </Body>
              </Group>
              <Group $h={20.500} $mb={7}><Head title="Edit controls" /></Group>
              <Group $h={244} $mb={6}>
                <Head title="Constraints" />
                <Body $pt={10}>
                  <Line $h={22}>Filter:<Select>All<Drop /></Select></Line>
                  <Line $h={22}><CheckLabel><Check on />Hide Internal Aligment</CheckLabel></Line>
                  <List thumb={66} mt={2}>
                    {constraintIcons.map((n, i) => (
                      <Row key={i}><RowIcon $w={14}><Check on /></RowIcon><RowIcon $w={24.500}><Icon n={n} s={15} /></RowIcon>{`Constraint${i + 1}`}</Row>
                    ))}
                  </List>
                </Body>
              </Group>
              <Group $h={306} $mb={0}>
                <Head title="Elements" />
                <Body $pt={10}>
                  <Line $h={22.500}>Type:<Select $dim>Edge<Drop $dim /></Select></Line>
                  <List thumb={85} mt={2.500}>
                    {Array.from({ length: 9 }, (_, i) => (
                      <Row key={i}>
                        <RowIcon $w={17}>
                          <svg width="16" height="16" viewBox="0 0 16 16">
                            {i < 4 ? (
                              <><path d="M3 13.500 13 3" stroke="#6f9a4c" strokeWidth="2.200" /><circle cx="3.200" cy="13.200" r="2.700" fill="#b31c1c" /><circle cx="13" cy="3" r="2.700" fill="#b31c1c" /></>
                            ) : (
                              <><circle cx="8" cy="8" r="6.200" fill="none" stroke="#6f9a4c" strokeWidth="2.200" /><circle cx="8" cy="8" r="2.700" fill="#b31c1c" /></>
                            )}
                          </svg>
                        </RowIcon>
                        <Gap $w={4} />
                        {`${i + 1}-${i < 4 ? "Line" : "Circle"}`}
                      </Row>
                    ))}
                  </List>
                  <Line $h={28}><CheckLabel><Check />Extended Naming</CheckLabel></Line>
                  <Line $h={16}><CheckLabel><Check on />Auto-switch to Edge</CheckLabel></Line>
                  <Line $h={24}>"Ctrl": multiple selection</Line>
                  <Line $h={21}>"Z": switch to next valid type</Line>
                </Body>
              </Group>
            </TaskArea>
          </Side>
          <Mdi>
            <Viewport><Scene /></Viewport>
            <DocTabs>
              <DocTab>
                <Logo /><span>dice : 1*</span>
                <CloseBadge><svg width="9" height="9" viewBox="0 0 9 9"><path d="M2 2 7 7M7 2 2 7" stroke="#fff" strokeWidth="1.600" /></svg></CloseBadge>
              </DocTab>
            </DocTabs>
          </Mdi>
        </Main>
        <StatusBar>
          <StatusMsg>Preselected: dice.Sketch001.Edge10 (1.252395,-2.667284,7.511000)</StatusMsg>
          <NavStyle>
            <svg width="11" height="14" viewBox="0 0 11 14"><rect x="1" y="1" width="8.500" height="12" rx="3.500" fill="none" stroke="#444" strokeWidth="1.400" /><path d="M5.300 3.500V6.500" stroke="#444" strokeWidth="1.200" /></svg>
            CAD<Drop style={{ marginLeft: -4 }} />
          </NavStyle>
          <Size>29.68 mm x 17.42 mm</Size>
        </StatusBar>
        <TaskStrip />
      </Window>
    </>
  );
}
